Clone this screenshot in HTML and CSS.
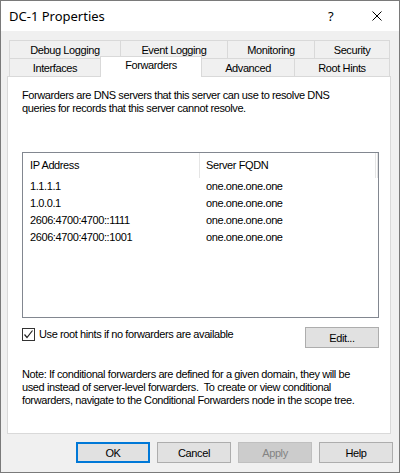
FILE: index.html
```html
<!DOCTYPE html>
<html>
<head>
<meta charset="utf-8">
<link rel="stylesheet" href="styles.css">
</head>
<body>
<div class="window">
  <div class="titlebar">
    <span class="title">DC-1 Properties</span>
    <span class="help">?</span>
    <span class="close"><svg width="10" height="10" viewBox="0 0 10 10"><path d="M0.5 0.5 L9.5 9.5 M9.5 0.5 L0.5 9.5" stroke="#000" stroke-width="1" fill="none"/></svg></span>
  </div>
  <div class="body">
    <div class="tabs">
      <div class="tabrow">
        <div class="tab w111">Debug Logging</div>
        <div class="tab w108">Event Logging</div>
        <div class="tab w88">Monitoring</div>
        <div class="tab w76">Security</div>
      </div>
      <div class="tabrow front">
        <div class="tab w92">Interfaces</div>
        <div class="tab w102 selected">Forwarders</div>
        <div class="tab w94">Advanced</div>
        <div class="tab w96">Root Hints</div>
      </div>
    </div>
    <div class="panel">
      <p class="intro">Forwarders are DNS servers that this server can use to resolve DNS<br>queries for records that this server cannot resolve.</p>
      <div class="list">
        <div class="list-head">
          <div class="col1">IP Address</div>
          <div class="col2">Server FQDN</div>
          <div class="col3"></div>
        </div>
        <div class="row"><div class="col1">1.1.1.1</div><div class="col2">one.one.one.one</div></div>
        <div class="row"><div class="col1">1.0.0.1</div><div class="col2">one.one.one.one</div></div>
        <div class="row"><div class="col1">2606:4700:4700::1111</div><div class="col2">one.one.one.one</div></div>
        <div class="row"><div class="col1">2606:4700:4700::1001</div><div class="col2">one.one.one.one</div></div>
      </div>
      <div class="opts">
        <label class="check">
          <span class="box"><svg width="11" height="11" viewBox="0 0 11 11"><path d="M1.5 5.5 L4 8.5 L9.5 1.5" stroke="#222" stroke-width="1.2" fill="none"/></svg></span>
          <span class="check-label">Use root hints if no forwarders are available</span>
        </label>
        <div class="btn edit">Edit...</div>
      </div>
      <p class="note">Note: If conditional forwarders are defined for a given domain, they will be<br>used instead of server-level forwarders.&nbsp; To create or view conditional<br>forwarders, navigate to the Conditional Forwarders node in the scope tree.</p>
    </div>
    <div class="buttons">
      <div class="btn default">OK</div>
      <div class="btn">Cancel</div>
      <div class="btn disabled">Apply</div>
      <div class="btn">Help</div>
    </div>
  </div>
</div>
</body>
</html>
```

FILE: styles.css
```css
* { box-sizing: border-box; }
html, body { margin: 0; padding: 0; background: #f0f0f0; }
body {
  font-family: "Liberation Sans", Arial, sans-serif;
  font-size: 11px;
  letter-spacing: -0.4px;
  color: #000;
}
.window {
  width: 400px;
  height: 473px;
  border: 1px solid #7a7a7a;
  background: #f0f0f0;
  display: flex;
  flex-direction: column;
}
.titlebar {
  height: 30px;
  background: #fff;
  display: flex;
  align-items: center;
  padding-left: 8px;
  letter-spacing: 0;
}
.title {
  font-family: "Noto Sans", sans-serif;
  font-size: 13px;
  flex: 1;
  padding-bottom: 1px;
}
.help {
  font-family: "Noto Sans", sans-serif;
  font-size: 13px;
  width: 12px;
  margin-right: 32px;
  padding-bottom: 1px;
}
.close {
  width: 10px;
  height: 10px;
  margin-right: 17px;
  display: flex;
  margin-bottom: 1px;
}
.body {
  flex: 1;
  padding: 9px 6px 0 6px;
  display: flex;
  flex-direction: column;
}
.tabs {
  padding-left: 2px;
  display: flex;
  flex-direction: column;
}
.tabrow {
  display: flex;
  height: 18px;
}
.tab {
  height: 18px;
  border: 1px solid #d9d9d9;
  border-bottom: none;
  background: #f0f0f0;
  margin-right: -1px;
  text-align: center;
  line-height: 17px;
  padding-top: 1px;
  white-space: nowrap;
}
.tabrow.front { position: relative; z-index: 2; }
.tab.selected {
  background: #fff;
  height: 21px;
  margin-top: -2px;
  padding-top: 0;
  line-height: 17px;
  position: relative;
  z-index: 3;
}
.w111 { width: 112px; }
.w108 { width: 108px; }
.w88 { width: 88px; }
.w76 { width: 76px; }
.w92 { width: 92px; }
.w102 { width: 102px; }
.w94 { width: 94px; }
.w96 { width: 96px; }

.panel {
  background: #fff;
  border: 1px solid #d9d9d9;
  width: 384px;
  height: 358px;
  padding: 12px 11px 0 14px;
}
.intro, .note {
  margin: 0;
  line-height: 13px;
  white-space: nowrap;
}
.list {
  margin-top: 37px;
  width: 357px;
  height: 166px;
  border: 1px solid #828790;
}
.list-head {
  display: flex;
  height: 25px;
}
.list-head > div {
  border-right: 1px solid #e5e5e5;
  line-height: 19px;
  padding-top: 3px;
}
.col1 { width: 177px; padding-left: 7px; }
.col2 { width: 176px; padding-left: 6px; }
.col3 { width: 2px; }
.row { display: flex; height: 17px; line-height: 17px; }

.opts {
  margin-top: 9px;
  display: flex;
  align-items: flex-start;
  justify-content: space-between;
  width: 357px;
  height: 21px;
}
.check {
  display: flex;
  align-items: center;
  gap: 4px;
  margin-top: 1px;
}
.check-label { line-height: 13px; }
.box {
  width: 13px;
  height: 13px;
  border: 1px solid #333;
  background: #fff;
  display: flex;
  align-items: center;
  justify-content: center;
}
.btn {
  width: 74px;
  height: 21px;
  background: #e1e1e1;
  border: 1px solid #adadad;
  display: flex;
  align-items: center;
  justify-content: center;
}
.note { margin-top: 20px; }
.buttons {
  margin-top: 8px;
  display: flex;
  justify-content: flex-end;
  gap: 7px;
}
.btn.default { border: 2px solid #0078d7; }
.btn.disabled { background: #cccccc; border-color: #bfbfbf; color: #838383; }
```
